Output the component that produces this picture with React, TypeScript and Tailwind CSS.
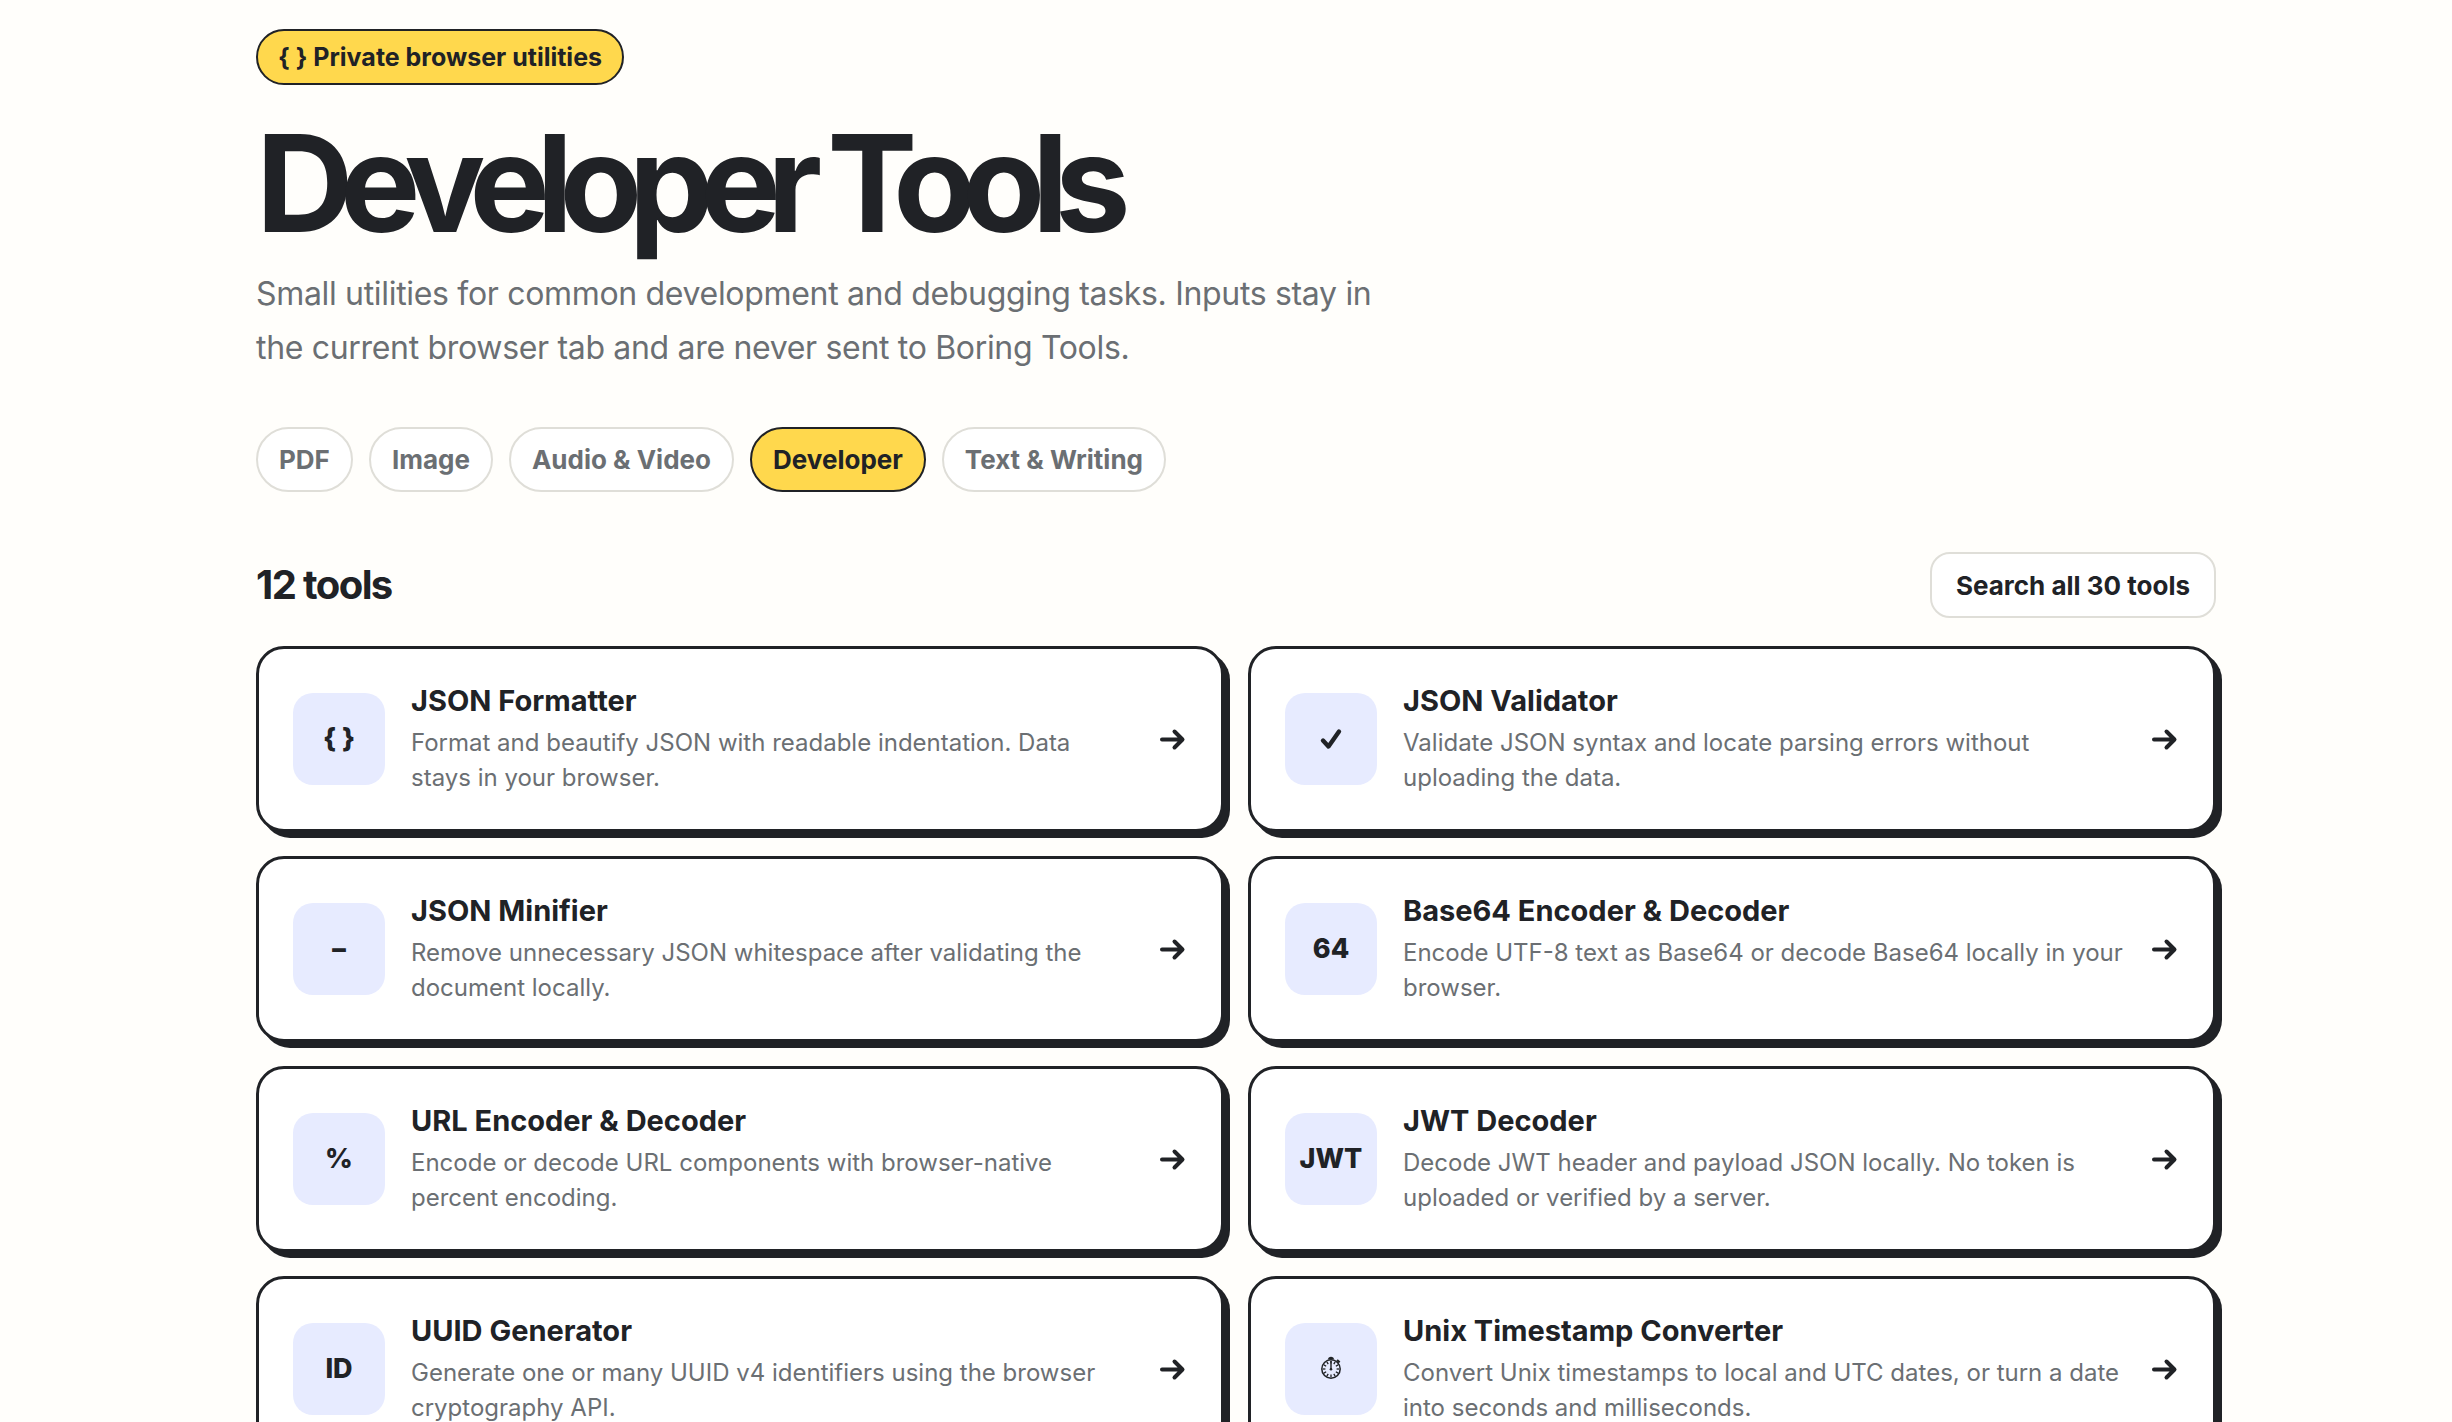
import React from "react";

type Tool = {
  name: string;
  description: string;
  icon: React.ReactNode;
};

const CheckIcon: React.FC = () => (
  <svg width="24" height="24" viewBox="0 0 24 24" fill="none" aria-hidden="true">
    <path
      d="M4 13.5 9.5 19.5 20 4.5"
      stroke="currentColor"
      strokeWidth="4.4"
      strokeLinecap="round"
      strokeLinejoin="round"
    />
  </svg>
);

const ticks = [0, 30, 60, 90, 120, 150, 180, 210, 240, 270, 300, 330];

const StopwatchIcon: React.FC = () => (
  <svg width="22" height="26" viewBox="0 0 22 26" fill="none" aria-hidden="true">
    <circle cx="11" cy="13" r="9.2" stroke="currentColor" strokeWidth="1.5" />
    {ticks.map((angle) => (
      <path
        key={angle}
        d="M11 4.8v2.6"
        stroke="currentColor"
        strokeWidth="1.3"
        transform={`rotate(${angle} 11 13)`}
      />
    ))}
    <path d="M11 5v8" stroke="currentColor" strokeWidth="1.4" />
    <circle cx="11" cy="13.2" r="1.3" fill="currentColor" />
    <path d="M8 3.4C8 1.6 9.3.8 11 .8s3 .8 3 2.6z" fill="currentColor" />
    <path d="m17 4 2.6 2.4" stroke="currentColor" strokeWidth="2.2" />
  </svg>
);

const ArrowIcon: React.FC = () => (
  <svg
    width="28"
    height="24"
    viewBox="0 0 28 24"
    fill="none"
    className="shrink-0"
    aria-hidden="true"
  >
    <path
      d="M3 12.5h20M15.5 4.5l8 8-8 8"
      stroke="currentColor"
      strokeWidth="4"
      strokeLinecap="round"
      strokeLinejoin="round"
    />
  </svg>
);

const categories = ["PDF", "Image", "Audio & Video", "Developer", "Text & Writing"];

const tools: Tool[] = [
  {
    name: "JSON Formatter",
    description:
      "Format and beautify JSON with readable indentation. Data stays in your browser.",
    icon: "{ }",
  },
  {
    name: "JSON Validator",
    description:
      "Validate JSON syntax and locate parsing errors without uploading the data.",
    icon: <CheckIcon />,
  },
  {
    name: "JSON Minifier",
    description:
      "Remove unnecessary JSON whitespace after validating the document locally.",
    icon: "−",
  },
  {
    name: "Base64 Encoder & Decoder",
    description:
      "Encode UTF-8 text as Base64 or decode Base64 locally in your browser.",
    icon: "64",
  },
  {
    name: "URL Encoder & Decoder",
    description:
      "Encode or decode URL components with browser-native percent encoding.",
    icon: "%",
  },
  {
    name: "JWT Decoder",
    description:
      "Decode JWT header and payload JSON locally. No token is uploaded or verified by a server.",
    icon: "JWT",
  },
  {
    name: "UUID Generator",
    description:
      "Generate one or many UUID v4 identifiers using the browser cryptography API.",
    icon: "ID",
  },
  {
    name: "Unix Timestamp Converter",
    description:
      "Convert Unix timestamps to local and UTC dates, or turn a date into seconds and milliseconds.",
    icon: <StopwatchIcon />,
  },
];

const ToolCard: React.FC<{ tool: Tool }> = ({ tool }) => (
  <a
    href="#"
    className="flex items-center rounded-[28px] border-3 border-[#202226] bg-white p-[34px] shadow-[6px_6px_0_#202226]"
  >
    <span className="flex size-[92px] shrink-0 items-center justify-center rounded-[20px] bg-[#e7ebff] text-[27px] leading-8 font-extrabold">
      {tool.icon}
    </span>
    <span className="ml-[26px] flex-1">
      <strong className="mb-[7px] block text-[29px] leading-[35px] font-bold">
        {tool.name}
      </strong>
      <span className="block text-[24px] leading-[35px] text-[#6b6f73]">
        {tool.description}
      </span>
    </span>
    <span className="ml-[26px]">
      <ArrowIcon />
    </span>
  </a>
);

const App: React.FC = () => {
  return (
    <div className="min-h-screen bg-[#fffefb] font-['Inter',sans-serif] text-[#202226]">
      <main className="pt-[29px] pr-[236px] pb-20 pl-64">
        {/* Intro */}
        <p className="flex h-14 w-fit items-center rounded-full border-2 border-[#202226] bg-[#ffd84d] px-5 text-[25px] leading-8 font-bold">
          {"{ } Private browser utilities"}
        </p>
        <h1 className="mt-7 text-[135px] leading-[140px] font-bold tracking-[-0.1em]">
          Developer Tools
        </h1>
        <p className="mt-[14px] max-w-[1160px] text-[32px] leading-[54px] tracking-[-0.01em] text-[#6b6f73]">
          Small utilities for common development and debugging tasks. Inputs stay in the
          current browser tab and are never sent to Boring Tools.
        </p>

        {/* Categories */}
        <nav className="mt-[52px] flex flex-wrap gap-4">
          {categories.map((category) => (
            <a
              key={category}
              href="#"
              className={
                category === "Developer"
                  ? "flex h-[65px] items-center rounded-full border-2 border-[#202226] bg-[#ffd84d] px-[21px] text-[26px] font-bold"
                  : "flex h-[65px] items-center rounded-full border-2 border-[#dfded8] bg-white px-[21px] text-[26px] font-bold text-[#6b6f73]"
              }
            >
              {category}
            </a>
          ))}
        </nav>

        {/* Tools */}
        <section>
          <div className="mt-[60px] flex items-center justify-between">
            <h2 className="text-[40px] leading-[48px] font-bold tracking-[-0.04em]">
              12 tools
            </h2>
            <a
              href="#"
              className="flex h-[66px] items-center rounded-[20px] border-2 border-[#dfded8] bg-white px-6 text-[26px] font-bold"
            >
              Search all 30 tools
            </a>
          </div>
          <div className="mt-7 grid grid-cols-2 gap-6">
            {tools.map((tool) => (
              <ToolCard key={tool.name} tool={tool} />
            ))}
          </div>
        </section>
      </main>
    </div>
  );
};

export default App;
